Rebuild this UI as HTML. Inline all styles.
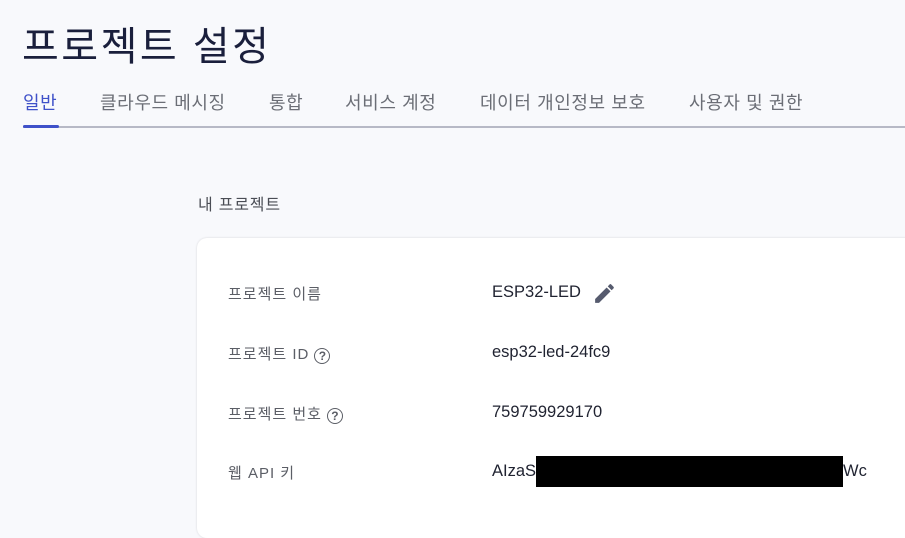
<!DOCTYPE html>
<html><head><meta charset="utf-8"><style>
body{margin:0;width:905px;height:509px;overflow:hidden;background:#f8f9fc;font-family:"Liberation Sans","Noto Sans CJK KR",sans-serif;position:relative}
.a{position:absolute;white-space:nowrap}
h1{position:absolute;left:22px;top:14px;margin:0;font-size:40px;font-weight:400;color:#1a1f3c;letter-spacing:2.5px}
.tab{position:absolute;top:89px;font-size:18px;color:#6b6e76;letter-spacing:0.6px}
.line{position:absolute;left:23px;top:126px;width:882px;height:2px;background:#b7b9c6}
.act{position:absolute;left:23px;top:125px;width:36px;height:3px;background:#3f51c9;border-radius:2px}
.card{position:absolute;left:197px;top:238px;width:740px;height:300px;background:#fff;border-radius:10px;box-shadow:0 0 2px rgba(0,0,0,.15)}
.lbl{position:absolute;left:228px;font-size:15px;color:#5b5e66;letter-spacing:1px}
.val{position:absolute;left:492px;font-size:16.5px;color:#1f2230}
.q{display:inline-block;width:14px;height:14px;border:1.6px solid #5b5e66;border-radius:50%;font-size:12px;line-height:14px;text-align:center;font-weight:bold;vertical-align:-1px;margin-left:5px;letter-spacing:0}
</style></head><body>
<h1>프로젝트 설정</h1>
<div class="tab" style="left:23px;color:#3f51c9">일반</div>
<div class="tab" style="left:100px">클라우드 메시징</div>
<div class="tab" style="left:269px">통합</div>
<div class="tab" style="left:345px">서비스 계정</div>
<div class="tab" style="left:480px">데이터 개인정보 보호</div>
<div class="tab" style="left:689px">사용자 및 권한</div>
<div class="line"></div><div class="act"></div>
<div class="a" style="left:198px;top:191px;font-size:16px;color:#4a4d55;letter-spacing:0.8px">내 프로젝트</div>
<div class="card"></div>
<div class="lbl" style="top:283px">프로젝트 이름</div>
<div class="val" style="top:283px">ESP32-LED</div>
<svg class="a" style="left:592px;top:281px" width="25" height="25" viewBox="0 0 24 24"><path fill="#565b6e" d="M3 17.25V21h3.75L17.8 9.94l-3.75-3.75L3 17.25zM20.7 7.04a1 1 0 000-1.41l-2.34-2.34a1 1 0 00-1.41 0l-1.83 1.83 3.75 3.75 1.83-1.83z"/></svg>
<div class="lbl" style="top:343px">프로젝트 ID<span class="q">?</span></div>
<div class="val" style="top:343px">esp32-led-24fc9</div>
<div class="lbl" style="top:403px">프로젝트 번호<span class="q">?</span></div>
<div class="val" style="top:403px">759759929170</div>
<div class="lbl" style="top:462px">웹 API 키</div>
<div class="val" style="top:462px">AIzaS</div>
<div class="a" style="left:536px;top:456px;width:307px;height:31px;background:#000"></div>
<div class="val" style="left:843px;top:462px">Wc</div>
</body></html>
